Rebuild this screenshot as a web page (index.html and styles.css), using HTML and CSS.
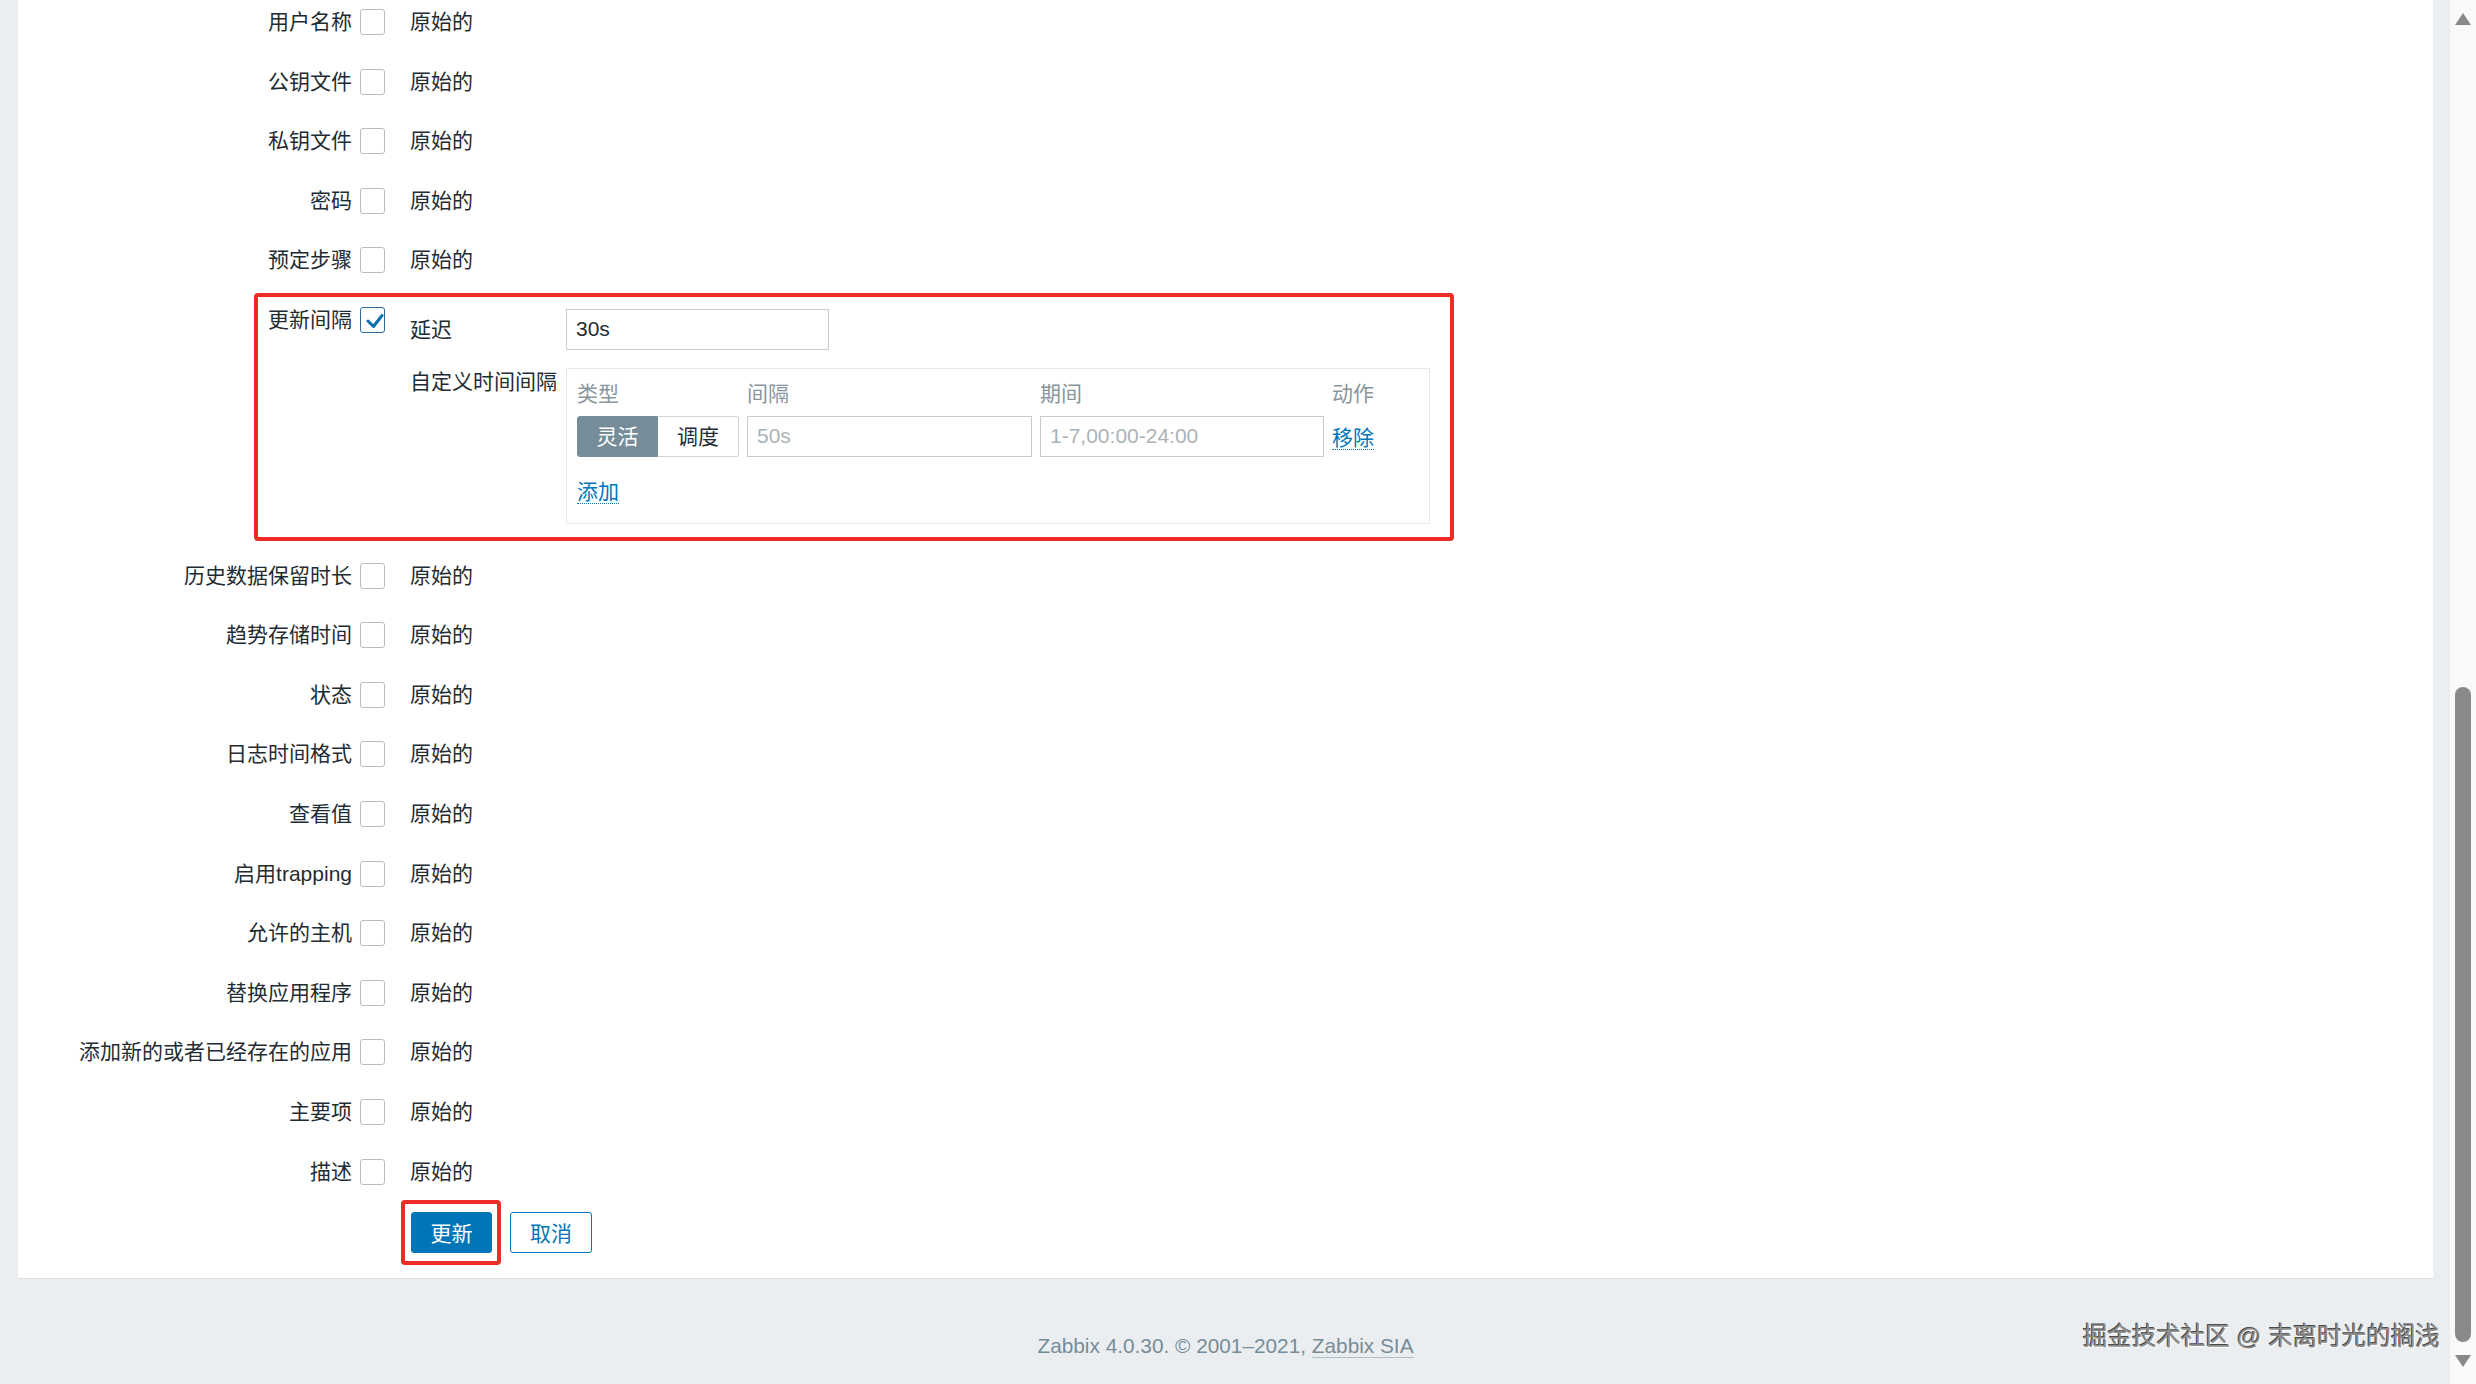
FILE: index.html
```html
<!DOCTYPE html>
<html lang="zh-CN">
<head>
    <meta charset="UTF-8">
    <meta name="viewport" content="width=device-width, initial-scale=1.0">
    <title>批量更新监控项</title>
    <link rel="stylesheet" href="styles.css">
</head>
<body>
    <div class="page">
        <div class="main">
            <div class="panel">
                <form class="form-list" onsubmit="return false">
                    <div class="row"><label class="lbl">用户名称</label><span class="cb"></span><span class="val">原始的</span></div>
                    <div class="row"><label class="lbl">公钥文件</label><span class="cb"></span><span class="val">原始的</span></div>
                    <div class="row"><label class="lbl">私钥文件</label><span class="cb"></span><span class="val">原始的</span></div>
                    <div class="row"><label class="lbl">密码</label><span class="cb"></span><span class="val">原始的</span></div>
                    <div class="row"><label class="lbl">预定步骤</label><span class="cb"></span><span class="val">原始的</span></div>

                    <div class="row interval">
                        <label class="lbl">更新间隔</label>
                        <span class="cb on">
                            <svg width="23" height="24" viewBox="0 0 23 24"><path d="M7 13 L12.5 18.5 L21 7.5" fill="none" stroke="#0a6ead" stroke-width="3" stroke-linecap="round" stroke-linejoin="round"/></svg>
                        </span>
                        <div class="fields">
                            <div class="field">
                                <span class="field-lbl">延迟</span>
                                <input class="input delay" type="text" value="30s">
                            </div>
                            <div class="field">
                                <span class="field-lbl top">自定义时间间隔</span>
                                <div class="intervals">
                                    <div class="grid">
                                        <span class="th">类型</span>
                                        <span class="th">间隔</span>
                                        <span class="th">期间</span>
                                        <span class="th">动作</span>

                                        <div class="radio">
                                            <span class="seg active">灵活</span>
                                            <span class="seg">调度</span>
                                        </div>
                                        <input class="input" type="text" placeholder="50s">
                                        <input class="input" type="text" placeholder="1-7,00:00-24:00">
                                        <span><a class="link" href="#">移除</a></span>
                                    </div>
                                    <div class="add"><a class="link" href="#">添加</a></div>
                                </div>
                            </div>
                        </div>
                        <span class="mark mark-interval"></span>
                    </div>

                    <div class="row"><label class="lbl">历史数据保留时长</label><span class="cb"></span><span class="val">原始的</span></div>
                    <div class="row"><label class="lbl">趋势存储时间</label><span class="cb"></span><span class="val">原始的</span></div>
                    <div class="row"><label class="lbl">状态</label><span class="cb"></span><span class="val">原始的</span></div>
                    <div class="row"><label class="lbl">日志时间格式</label><span class="cb"></span><span class="val">原始的</span></div>
                    <div class="row"><label class="lbl">查看值</label><span class="cb"></span><span class="val">原始的</span></div>
                    <div class="row"><label class="lbl">启用trapping</label><span class="cb"></span><span class="val">原始的</span></div>
                    <div class="row"><label class="lbl">允许的主机</label><span class="cb"></span><span class="val">原始的</span></div>
                    <div class="row"><label class="lbl">替换应用程序</label><span class="cb"></span><span class="val">原始的</span></div>
                    <div class="row"><label class="lbl">添加新的或者已经存在的应用</label><span class="cb"></span><span class="val">原始的</span></div>
                    <div class="row"><label class="lbl">主要项</label><span class="cb"></span><span class="val">原始的</span></div>
                    <div class="row last"><label class="lbl">描述</label><span class="cb"></span><span class="val">原始的</span></div>

                    <div class="buttons">
                        <button class="btn btn-primary" type="submit">更新</button>
                        <button class="btn btn-alt" type="button">取消</button>
                        <span class="mark mark-btn"></span>
                    </div>
                </form>
            </div>

            <footer class="footer">Zabbix 4.0.30. &copy; 2001–2021, <a href="#">Zabbix SIA</a></footer>
            <div class="watermark">掘金技术社区 @ 末离时光的搁浅</div>
        </div>

        <div class="scrollbar">
            <span class="arrow up"></span>
            <span class="thumb"></span>
            <span class="arrow down"></span>
        </div>
    </div>
</body>
</html>
```

FILE: styles.css
```css
* { margin: 0; padding: 0; box-sizing: border-box; }
html, body { height: 100%; overflow: hidden; }
body {
    font-family: "Liberation Sans", Arial, "Noto Sans CJK SC", sans-serif;
    font-size: 21px;
    color: #1f2c33;
}
.page { display: flex; height: 1384px; }
.main {
    flex: 1;
    position: relative;
    display: flex;
    flex-direction: column;
    background: #ebeef0;
    padding: 0 17px 0 18px;
}
.panel {
    background: #fff;
    border-bottom: 1px solid #dde1e4;
    padding: 9px 0 25px;
}

/* form rows */
.row {
    display: flex;
    align-items: flex-start;
    margin-bottom: 33.6px;
    position: relative;
}
.row.interval { margin-bottom: 39px; }
.row.last { margin-bottom: 27px; }
.lbl {
    width: 334px;
    flex: none;
    text-align: right;
    line-height: 26px;
    white-space: nowrap;
}
.cb {
    width: 25px;
    height: 26px;
    flex: none;
    margin: 0 25px 0 8px;
    border: 1px solid #b7bec3;
    border-radius: 3px;
    display: flex;
    align-items: center;
    justify-content: center;
}
.cb.on { border-color: #2a6a9c; }
.cb svg { display: block; }
.val { line-height: 26px; }

/* update interval block */
.fields {
    margin-top: 1.6px;
    display: flex;
    flex-direction: column;
    gap: 18px;
}
.field { display: flex; align-items: flex-start; }
.field-lbl { width: 156px; flex: none; line-height: 41px; white-space: nowrap; }
.field-lbl.top { line-height: 28px; }
.input {
    height: 41px;
    width: 100%;
    border: 1px solid #c6ccd0;
    padding: 0 9px;
    font: inherit;
    color: #1f2c33;
    background: #fff;
    outline: none;
}
.input::placeholder { color: #abb3b8; }
.input.delay { width: 263px; }
.intervals {
    width: 864px;
    border: 1px solid #e6e9eb;
    padding: 10px 10px 16px;
}
.grid {
    display: grid;
    grid-template-columns: 162px 285px 284px auto;
    column-gap: 8px;
    row-gap: 7px;
    align-items: center;
}
.th { line-height: 30px; color: #8a969d; }
.radio { display: flex; height: 41px; }
.seg {
    width: 81px;
    line-height: 39px;
    text-align: center;
    border: 1px solid #cfd5d9;
    background: #fff;
}
.seg:first-child { border-radius: 3px 0 0 3px; }
.seg:last-child { border-radius: 0 3px 3px 0; border-left: none; }
.seg.active { background: #768d99; border-color: #768d99; color: #fff; }
.link {
    color: #0275b8;
    text-decoration: none;
    border-bottom: 1px dotted #0275b8;
}
.add { margin-top: 20px; line-height: 30px; }

/* buttons */
.buttons {
    display: flex;
    gap: 18px;
    padding-left: 393px;
    position: relative;
}
.btn {
    height: 41px;
    width: 81px;
    border: 1px solid #0275b8;
    border-radius: 3px;
    font: inherit;
    cursor: pointer;
}
.btn-primary { background: #0275b8; color: #fff; }
.btn-alt { background: #fff; color: #0275b8; width: 82px; }

/* red annotation frames */
.mark {
    position: absolute;
    border: 4px solid #ee2b25;
    border-radius: 4px;
    pointer-events: none;
}
.mark-interval { left: 236px; top: -14.4px; width: 1200px; height: 248px; }
.mark-btn { left: 383px; top: -12px; width: 100px; height: 65px; }

/* footer */
.footer {
    text-align: center;
    padding-top: 56px;
    font-size: 20.8px;
    line-height: 22px;
    color: #768d99;
}
.footer a {
    color: inherit;
    text-decoration: none;
    border-bottom: 1px solid #b3bec4;
}
.watermark {
    position: absolute;
    right: 10px;
    bottom: 34px;
    font-size: 24.5px;
    line-height: 26px;
    color: #8e8e8e;
    text-shadow: -1px -1px 0 #4a4a4a, 1px 1px 0 #fff;
}

/* fake scrollbar */
.scrollbar {
    width: 26px;
    flex: none;
    background: #f9f9f9;
    display: flex;
    flex-direction: column;
    align-items: center;
}
.arrow { width: 0; height: 0; border-left: 8px solid transparent; border-right: 8px solid transparent; }
.arrow.up { margin-top: 13px; border-bottom: 12px solid #888; }
.arrow.down { margin-top: 13px; border-top: 12px solid #888; }
.thumb {
    margin-top: 662px;
    width: 16px;
    height: 655px;
    border-radius: 8px;
    background: #8a8a8a;
}
```
